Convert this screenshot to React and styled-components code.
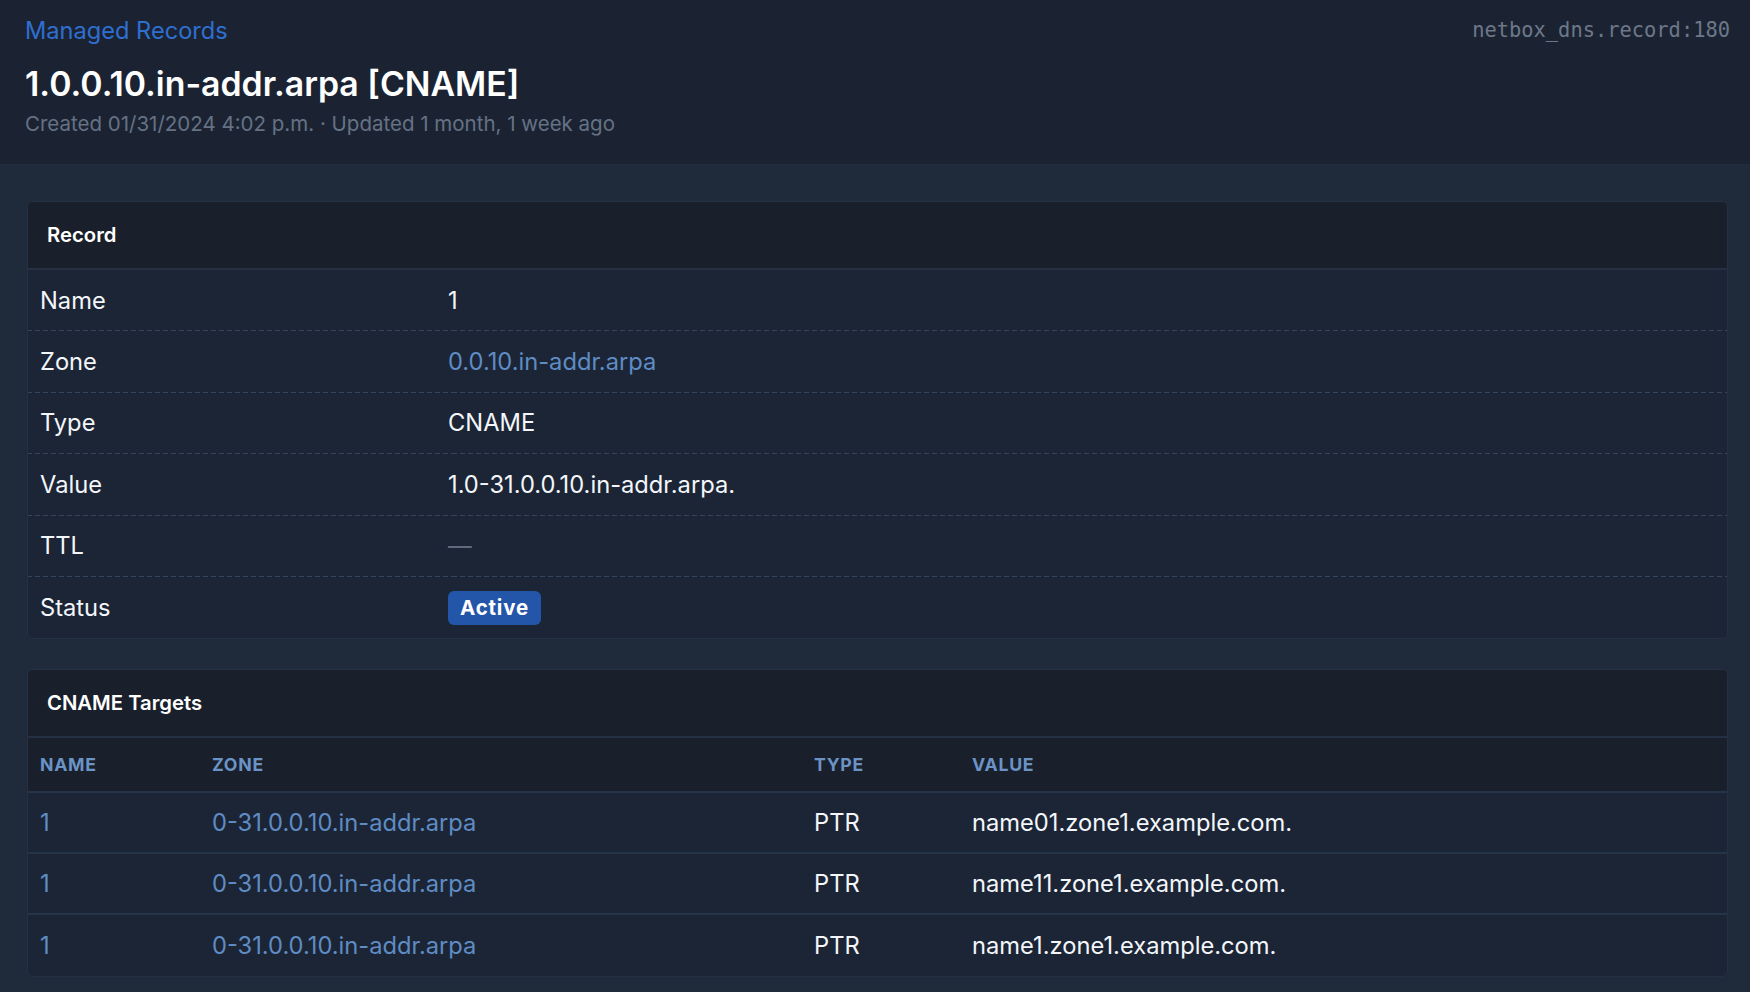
import React from "react";
import styled, { createGlobalStyle } from "styled-components";

const GlobalStyle = createGlobalStyle`
  html, body {
    margin: 0;
    padding: 0;
    background: #1f2a3b;
  }
  body {
    font-family: Inter, "Noto Sans", sans-serif;
    color: #f1f4f8;
    -webkit-font-smoothing: antialiased;
  }
  * {
    box-sizing: border-box;
  }
`;

const record = [
  { label: "Name", value: "1" },
  { label: "Zone", value: "0.0.10.in-addr.arpa", link: true },
  { label: "Type", value: "CNAME" },
  { label: "Value", value: "1.0-31.0.0.10.in-addr.arpa." },
  { label: "TTL", empty: true },
  { label: "Status", badge: "Active" },
];

const targets = [
  { name: "1", zone: "0-31.0.0.10.in-addr.arpa", type: "PTR", value: "name01.zone1.example.com." },
  { name: "1", zone: "0-31.0.0.10.in-addr.arpa", type: "PTR", value: "name11.zone1.example.com." },
  { name: "1", zone: "0-31.0.0.10.in-addr.arpa", type: "PTR", value: "name1.zone1.example.com." },
];

function App() {
  return (
    <Page>
      <GlobalStyle />
      <Header>
        <TopRow>
          <Breadcrumb href="#">Managed Records</Breadcrumb>
          <ObjectId>netbox_dns.record:180</ObjectId>
        </TopRow>
        <Title>1.0.0.10.in-addr.arpa [CNAME]</Title>
        <Meta>Created 01/31/2024 4:02 p.m. · Updated 1 month, 1 week ago</Meta>
      </Header>

      <Content>
        <Card>
          <CardHeader>Record</CardHeader>
          {record.map((r, i) => (
            <AttrRow key={r.label} $last={i === record.length - 1}>
              <AttrLabel>{r.label}</AttrLabel>
              <AttrValue>
                {r.link && <TextLink href="#">{r.value}</TextLink>}
                {r.empty && <Muted>—</Muted>}
                {r.badge && <Badge>{r.badge}</Badge>}
                {!r.link && !r.empty && !r.badge && r.value}
              </AttrValue>
            </AttrRow>
          ))}
        </Card>

        <Card>
          <CardHeader>CNAME Targets</CardHeader>
          <TableHead>
            <HeadCell>Name</HeadCell>
            <HeadCell>Zone</HeadCell>
            <HeadCell>Type</HeadCell>
            <HeadCell>Value</HeadCell>
          </TableHead>
          {targets.map((t, i) => (
            <TableRow key={i} $last={i === targets.length - 1}>
              <Cell>
                <TextLink href="#">{t.name}</TextLink>
              </Cell>
              <Cell>
                <TextLink href="#">{t.zone}</TextLink>
              </Cell>
              <Cell>{t.type}</Cell>
              <Cell>{t.value}</Cell>
            </TableRow>
          ))}
        </Card>
      </Content>
    </Page>
  );
}

export default App;

const Page = styled.div`
  min-height: 100vh;
  background: #1f2a3b;
`;

const Header = styled.header`
  background: #1b2333;
  border-bottom: 1px solid #222c3d;
  padding: 12px 20px 26px 25px;
`;

const TopRow = styled.div`
  display: flex;
  justify-content: space-between;
  align-items: center;
  height: 36px;
`;

const Breadcrumb = styled.a`
  color: #2f6fd0;
  font-size: 23.6px;
  text-decoration: none;
`;

const ObjectId = styled.span`
  font-family: "DejaVu Sans Mono", "Liberation Mono", monospace;
  font-size: 20.4px;
  color: #6c7888;
`;

const Title = styled.h1`
  margin: 16px 0 0;
  font-size: 33.8px;
  line-height: 40px;
  font-weight: 600;
  color: #ffffff;
`;

const Meta = styled.div`
  margin-top: 6px;
  font-size: 20.5px;
  line-height: 28px;
  color: #657284;
`;

const Content = styled.main`
  padding: 36px 22px 19px 27px;
  display: flex;
  flex-direction: column;
  gap: 30px;
`;

const Card = styled.section`
  background: #1c2535;
  border: 1px solid #243043;
  border-radius: 6px;
  overflow: hidden;
`;

const CardHeader = styled.div`
  height: 68px;
  display: flex;
  align-items: center;
  padding: 0 19px 2px;
  background: #19202b;
  border-bottom: 2px solid #243043;
  font-size: 20.3px;
  font-weight: 600;
  color: #ffffff;
`;

const AttrRow = styled.div`
  display: grid;
  grid-template-columns: 408px 1fr;
  height: 61.4px;
  align-items: center;
  border-bottom: ${(p) => (p.$last ? "none" : "1px solid transparent")};
  border-image: ${(p) =>
    p.$last
      ? "none"
      : "repeating-linear-gradient(to right, #34455c 0 5px, transparent 5px 8px) 1"};
`;

const AttrLabel = styled.div`
  padding: 0 12px;
  font-size: 23.7px;
  color: #f3f6fa;
`;

const AttrValue = styled.div`
  padding: 0 12px;
  font-size: 23.7px;
  color: #f3f6fa;
  display: flex;
  align-items: center;
`;

const TextLink = styled.a`
  color: #5f8cc4;
  text-decoration: none;
`;

const Muted = styled.span`
  color: #5f6b7b;
`;

const Badge = styled.span`
  display: inline-flex;
  align-items: center;
  justify-content: center;
  height: 34px;
  padding: 0 12px;
  border-radius: 6px;
  background: #2356a8;
  color: #ffffff;
  font-size: 20.5px;
  font-weight: 700;
  letter-spacing: 0.04em;
`;

const cols = "172px 602px 158px 1fr";

const TableHead = styled.div`
  display: grid;
  grid-template-columns: ${cols};
  height: 55px;
  align-items: center;
  background: #19202b;
  border-bottom: 2px solid #26344a;
`;

const HeadCell = styled.div`
  padding: 0 12px;
  font-size: 17.7px;
  font-weight: 700;
  text-transform: uppercase;
  letter-spacing: 0.04em;
  color: #6b93c6;
`;

const TableRow = styled.div`
  display: grid;
  grid-template-columns: ${cols};
  height: 61px;
  align-items: center;
  border-bottom: ${(p) => (p.$last ? "none" : "2px solid #26344a")};
`;

const Cell = styled.div`
  padding: 0 12px;
  font-size: 23.7px;
  color: #f3f6fa;
`;
